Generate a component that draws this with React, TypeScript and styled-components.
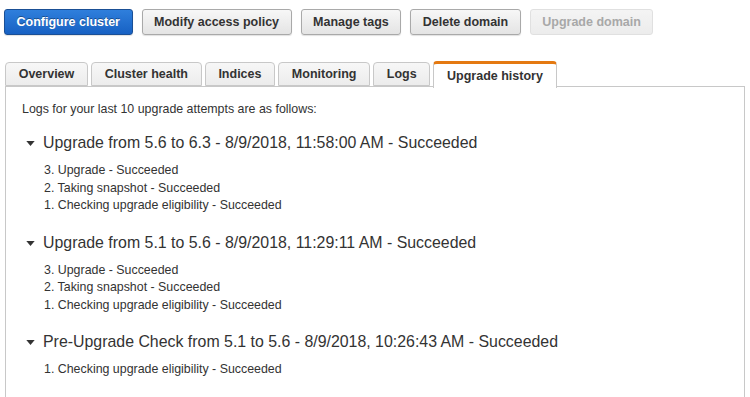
import React from 'react';
import styled, { createGlobalStyle } from 'styled-components';

const GlobalStyle = createGlobalStyle`
    body {
        margin: 0;
        background: #fff;
        font-family: Arial, "Liberation Sans", sans-serif;
        color: #333;
    }
`;

const attempts = [
    {
        title: 'Upgrade from 5.6 to 6.3 - 8/9/2018, 11:58:00 AM - Succeeded',
        steps: [
            '3. Upgrade - Succeeded',
            '2. Taking snapshot - Succeeded',
            '1. Checking upgrade eligibility - Succeeded',
        ],
    },
    {
        title: 'Upgrade from 5.1 to 5.6 - 8/9/2018, 11:29:11 AM - Succeeded',
        steps: [
            '3. Upgrade - Succeeded',
            '2. Taking snapshot - Succeeded',
            '1. Checking upgrade eligibility - Succeeded',
        ],
    },
    {
        title: 'Pre-Upgrade Check from 5.1 to 5.6 - 8/9/2018, 10:26:43 AM - Succeeded',
        steps: ['1. Checking upgrade eligibility - Succeeded'],
    },
];

const tabs = ['Overview', 'Cluster health', 'Indices', 'Monitoring', 'Logs', 'Upgrade history'];

const App = () => {
    return (
        <Page>
            <GlobalStyle />
            <Toolbar>
                <Button $variant="primary">Configure cluster</Button>
                <Button>Modify access policy</Button>
                <Button>Manage tags</Button>
                <Button>Delete domain</Button>
                <Button $variant="disabled" disabled>
                    Upgrade domain
                </Button>
            </Toolbar>

            <TabBar>
                {tabs.map((t) => (
                    <Tab key={t} $active={t === 'Upgrade history'}>
                        {t}
                    </Tab>
                ))}
            </TabBar>

            <Panel>
                <Intro>Logs for your last 10 upgrade attempts are as follows:</Intro>
                {attempts.map((a) => (
                    <Attempt key={a.title}>
                        <AttemptTitle>
                            <Caret viewBox="0 0 10 6">
                                <path d="M0 0 L10 0 L5 6 Z" fill="#333" />
                            </Caret>
                            {a.title}
                        </AttemptTitle>
                        <StepList>
                            {a.steps.map((s) => (
                                <li key={s}>{s}</li>
                            ))}
                        </StepList>
                    </Attempt>
                ))}
            </Panel>
        </Page>
    );
};

const Page = styled.div`
    padding: 9px 5px 0 5px;
    height: 397px;
    box-sizing: border-box;
    display: flex;
    flex-direction: column;
`;

const Toolbar = styled.div`
    display: flex;
    gap: 9px;
    margin-left: -1px;
`;

const Button = styled.button<{ $variant?: 'primary' | 'disabled' }>`
    height: 26px;
    padding: 0 11.5px;
    font-family: Arial, "Liberation Sans", sans-serif;
    font-size: 12.5px;
    font-weight: bold;
    border-radius: 3px;
    cursor: pointer;
    border: 1px solid
        ${({ $variant }) =>
            $variant === 'primary' ? '#1a4f95' : $variant === 'disabled' ? '#e0e0e0' : '#a9a9a9'};
    color: ${({ $variant }) =>
        $variant === 'primary' ? '#fff' : $variant === 'disabled' ? '#a8a8a8' : '#333'};
    background: ${({ $variant }) =>
        $variant === 'primary'
            ? 'linear-gradient(#2f7fdc, #1761c3)'
            : $variant === 'disabled'
              ? 'linear-gradient(#f4f4f4, #ececec)'
              : 'linear-gradient(#f7f7f7, #e4e4e4)'};
    box-shadow: ${({ $variant }) =>
        $variant === 'disabled' ? 'none' : '0 1px 1px rgba(0, 0, 0, 0.12)'};
    text-shadow: ${({ $variant }) => ($variant === 'primary' ? '0 -1px 0 rgba(0,0,0,0.35)' : 'none')};
`;

const TabBar = styled.div`
    display: flex;
    gap: 3px;
    margin-top: 27px;
    position: relative;
    z-index: 1;
`;

const Tab = styled.div<{ $active?: boolean }>`
    height: ${({ $active }) => ($active ? '27px' : '24px')};
    margin-top: ${({ $active }) => ($active ? '-1px' : '0')};
    margin-bottom: ${({ $active }) => ($active ? '-2px' : '0')};
    box-sizing: border-box;
    display: flex;
    align-items: center;
    padding: 0 12.7px;
    font-size: 12.5px;
    font-weight: bold;
    color: #333;
    border: 1px solid #c8c8c8;
    border-bottom: ${({ $active }) => ($active ? 'none' : '1px solid #c8c8c8')};
    border-top: ${({ $active }) => ($active ? '3px solid #e47911' : '1px solid #c8c8c8')};
    border-radius: 4px 4px 0 0;
    background: ${({ $active }) => ($active ? '#fff' : 'linear-gradient(#f7f7f7, #ececec)')};
`;

const Panel = styled.div`
    flex: 1;
    border: 1px solid #c8c8c8;
    border-bottom: none;
    padding: 14px 16px 0 16px;
    background: #fff;
`;

const Intro = styled.div`
    font-size: 12.4px;
    line-height: 17px;
    color: #333;
    margin-bottom: 15px;
`;

const Attempt = styled.div`
    margin-bottom: 18px;
`;

const AttemptTitle = styled.div`
    display: flex;
    align-items: center;
    font-size: 15.9px;
    line-height: 20px;
    color: #333;
`;

const Caret = styled.svg`
    width: 9px;
    height: 5px;
    margin: 1px 8px 0 4px;
`;

const StepList = styled.ul`
    list-style: none;
    margin: 9px 0 0 0;
    padding: 0 0 0 22px;
    font-size: 12.4px;
    line-height: 17.5px;
    color: #333;
`;

export default App;
